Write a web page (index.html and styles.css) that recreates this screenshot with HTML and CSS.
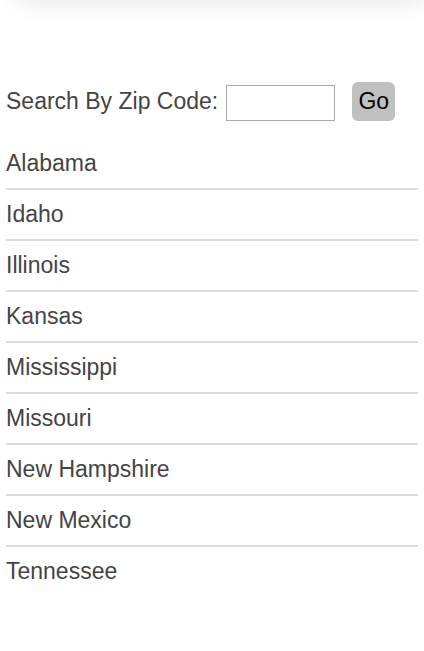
FILE: index.html
```html
<!DOCTYPE html>
<html lang="en">
<head>
  <meta charset="UTF-8">
  <title>States</title>
  <meta name="viewport" content="width=device-width, initial-scale=1.0">
  <link rel="stylesheet" href="styles.css">
</head>
<body>
  <div class="topbar"></div>

  <main>
    <form class="busca">
      <label for="zip">Search By Zip Code:</label>
      <input type="text" id="zip">
      <button type="submit">Go</button>
    </form>

    <ul class="estados">
      <li>Alabama</li>
      <li>Idaho</li>
      <li>Illinois</li>
      <li>Kansas</li>
      <li>Mississippi</li>
      <li>Missouri</li>
      <li>New Hampshire</li>
      <li>New Mexico</li>
      <li>Tennessee</li>
    </ul>
  </main>
</body>
</html>
```

FILE: styles.css
```css
body {
  margin: 0;
  font-family: 'Liberation Sans', Arial, sans-serif;
  background: #fff;
  color: #444;
}

.topbar {
  position: absolute;
  top: -40px;
  left: 18px;
  right: 0;
  height: 40px;
  background: #fff;
  box-shadow: 0 0 24px rgba(0,0,0,0.12);
}

main {
  padding: 82px 6px 0;
}

.busca {
  display: flex;
  align-items: center;
  font-size: 23px;
}

.busca input {
  width: 109px;
  height: 36px;
  margin: 2px 0 0 8px;
  padding: 0 4px;
  border: 1px solid #a9a9a9;
  box-sizing: border-box;
  font-size: 16px;
}

.busca button {
  width: 43px;
  height: 39px;
  margin-left: 17px;
  padding: 0;
  background-color: #c0c0c0;
  color: #000;
  border: none;
  border-radius: 6px;
  font-family: inherit;
  font-size: 23px;
}

.estados {
  list-style: none;
  margin: 18px 0 0;
  padding: 0;
}

.estados li {
  font-size: 23px;
  line-height: 27px;
  padding: 11px 0;
  border-bottom: 2px solid #dcdcdc;
}

.estados li:last-child {
  border-bottom: none;
}
```
